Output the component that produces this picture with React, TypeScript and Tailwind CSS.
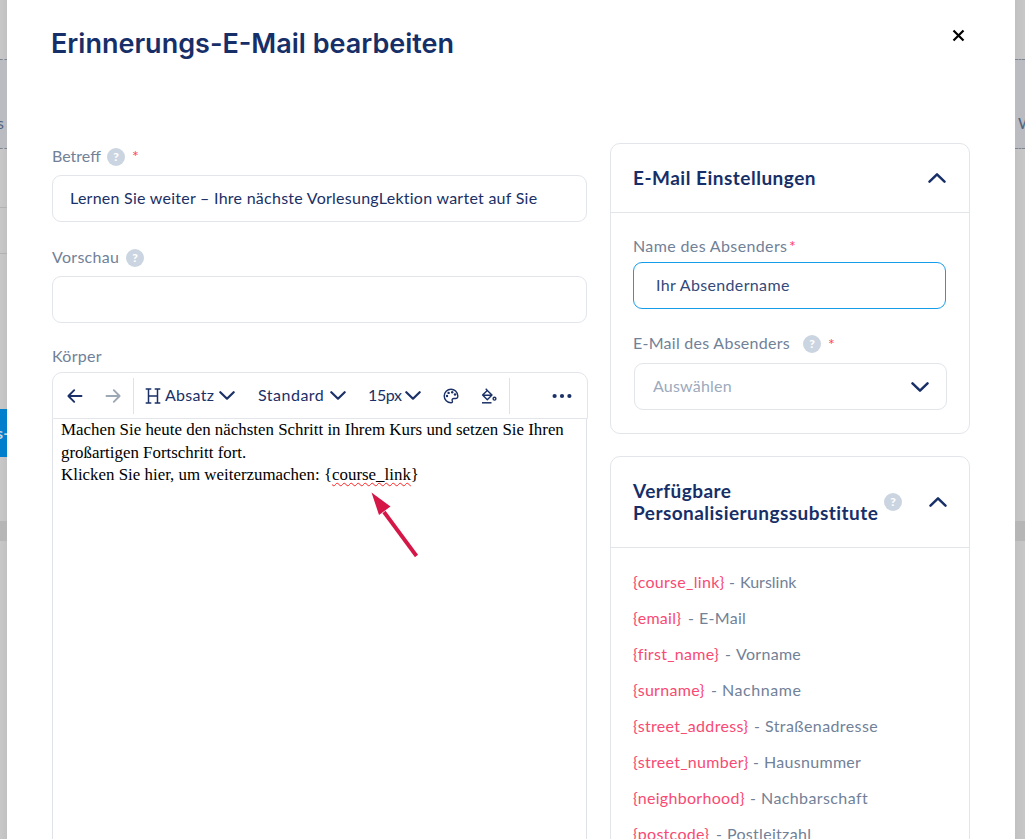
import React from 'react';

const PLACEHOLDERS = [
  { token: '{course_link}', label: 'Kurslink', tokenClass: 'w-[91px]', labelClass: 'tracking-[0px]' },
  { token: '{email}', label: 'E-Mail', tokenClass: 'w-[50px]', labelClass: '' },
  { token: '{first_name}', label: 'Vorname', tokenClass: 'w-[87px]', labelClass: '' },
  { token: '{surname}', label: 'Nachname', tokenClass: 'w-[73px]', labelClass: 'tracking-[0.55px]' },
  { token: '{street_address}', label: 'Straßenadresse', tokenClass: 'w-[116px]', labelClass: 'tracking-[0.4px]' },
  { token: '{street_number}', label: 'Hausnummer', tokenClass: 'w-[115px]', labelClass: '' },
  { token: '{neighborhood}', label: 'Nachbarschaft', tokenClass: 'w-[112px]', labelClass: 'tracking-[0.4px]' },
  { token: '{postcode}', label: 'Postleitzahl', tokenClass: 'w-[78px]', labelClass: '' },
];

function Help({ className = '' }: { className?: string }) {
  return (
    <span className={`flex h-[18px] w-[18px] shrink-0 items-center justify-center rounded-full bg-[#cbd5e1] text-[12px] leading-none font-black tracking-normal text-white ${className}`}>
      ?
    </span>
  );
}

function Star({ className = '' }: { className?: string }) {
  return <span className={`text-[16px] leading-none text-[#ff4069] ${className}`}>*</span>;
}

function Chevron({ up = false, className = '' }: { up?: boolean; className?: string }) {
  return (
    <svg viewBox="0 0 18 10" className={`shrink-0 ${className}`} fill="none" stroke="currentColor" strokeWidth="2.5" strokeLinecap="round" strokeLinejoin="round">
      <path d={up ? 'M1.5 8.6 9 1.4l7.5 7.2' : 'M1.5 1.4 9 8.6l7.5-7.2'} />
    </svg>
  );
}

function Backdrop({ side }: { side: 'left' | 'right' }) {
  const left = side === 'left';
  return (
    <div className={`flex h-full shrink-0 flex-col overflow-hidden from-[#c8c8c8] to-[#c1c1c1] text-[#52657f] ${left ? 'w-[7px] bg-linear-to-r' : 'w-[10px] bg-linear-to-l'}`}>
      <div className="h-[59px] shrink-0" />
      <div className="flex h-[90px] shrink-0 items-end border-y border-dashed border-[#7d8791] bg-[#bbbcc2] pb-[15px]">
        <span className={`text-[16px] leading-[20px] ${left ? '-ml-[3px]' : 'ml-[3px]'}`}>{left ? 's' : 'W'}</span>
      </div>
      <div className={`h-[59px] shrink-0 border-b ${left ? 'border-[#b0b2b4]' : 'border-transparent'}`} />
      <div className={`h-[46px] shrink-0 border-b ${left ? 'border-[#b0b2b4]' : 'border-transparent'}`} />
      <div className="h-[155px] shrink-0" />
      <div className={`flex h-12 shrink-0 items-center text-[16px] font-bold whitespace-nowrap text-[#c6d4df] ${left ? 'bg-[#0080cc]' : ''}`}>
        {left && <span className="-ml-[4px]">s-</span>}
      </div>
      <div className="h-16 shrink-0" />
      <div className="h-5 shrink-0 bg-[#b6b6b6]" />
    </div>
  );
}

function Toolbar() {
  return (
    <div className="flex h-[47px] w-[536px] items-center rounded-t-[10px] border border-[#e2e5e9] bg-white text-[16px] whitespace-nowrap text-[#1a3066]">
      <svg viewBox="0 0 16 16" className="ml-[14px] h-4 w-4" fill="none" stroke="currentColor" strokeWidth="1.9" strokeLinecap="round" strokeLinejoin="round">
        <path d="M14.5 8h-13M7.2 2.2 1.4 8l5.8 5.8" />
      </svg>
      <svg viewBox="0 0 16 16" className="ml-[22px] h-4 w-4 text-[#9ca8b4]" fill="none" stroke="currentColor" strokeWidth="1.9" strokeLinecap="round" strokeLinejoin="round">
        <path d="M1.5 8h13M8.8 2.2 14.6 8l-5.8 5.8" />
      </svg>
      <div className="ml-[12px] h-9 w-px bg-[#dfe2e6]" />
      <svg viewBox="0 0 16 16" className="ml-[11px] h-4 w-4" fill="none" stroke="currentColor" strokeWidth="1.5">
        <path d="M3.5 1v14M12.5 1v14M3.5 8h9M.7 1h5.6M9.7 1h5.6M.7 15h5.6M9.7 15h5.6" />
      </svg>
      <span className="-mt-[2px] ml-[4px] w-[50px]">Absatz</span>
      <Chevron className="ml-[4px] h-[9px] w-4" />
      <span className="-mt-[2px] ml-[23px] w-[68px] tracking-[0.5px]">Standard</span>
      <Chevron className="ml-[4px] h-[9px] w-4" />
      <span className="-mt-[2px] ml-[22px] w-[33px] tracking-[-0.4px]">15px</span>
      <Chevron className="ml-[4px] h-[9px] w-4" />
      <svg viewBox="0 0 16 16" className="ml-[22px] h-4 w-4" fill="none" stroke="currentColor" strokeWidth="1.4" strokeLinejoin="round">
        <path d="M8 1.2A6.8 6.8 0 1 0 8 14.8c1.2 0 1.7-.8 1.3-1.8-.6-1.5.1-2.5 1.7-2.5h1.5c1.6 0 2.5-1.1 2.3-2.7C14.4 4.1 11.6 1.2 8 1.2Z" />
        <g fill="currentColor" stroke="none">
          <circle cx="4" cy="8" r="1.2" />
          <circle cx="5.6" cy="4.9" r="1.2" />
          <circle cx="9.2" cy="4.2" r="1.2" />
          <circle cx="12" cy="6.5" r="1.2" />
        </g>
      </svg>
      <svg viewBox="0 0 16 16" className="ml-[22px] h-4 w-4" fill="none" stroke="currentColor" strokeWidth="1.4" strokeLinejoin="round">
        <path d="M4.7.8 6.9 2.9M6.3 2.4 11 7.1 6.3 11.8 1.6 7.1ZM1.8 7.2h9" />
        <circle cx="13.5" cy="10.7" r="1.4" />
        <path d="M1 14.8h9.5" strokeWidth="1.5" />
      </svg>
      <div className="ml-[12px] h-9 w-px bg-[#dfe2e6]" />
      <svg viewBox="0 0 20 6" className="ml-[42px] h-[6px] w-5" fill="currentColor">
        <circle cx="2.6" cy="3" r="2.1" />
        <circle cx="10" cy="3" r="2.1" />
        <circle cx="17.4" cy="3" r="2.1" />
      </svg>
    </div>
  );
}

export default function App() {
  return (
    <div className="flex h-[839px] w-[1025px] overflow-hidden bg-[#c7c7c7] font-['Lato',sans-serif] text-[16px] leading-[20px] tracking-[0.3px] text-[#718198]">
      <Backdrop side="left" />

      <main className="h-full w-[1008px] shrink-0 overflow-hidden bg-white pl-[45px]">
        <header className="flex h-[143px] items-start justify-between pt-[27px] pr-[50px]">
          <h1 className="-ml-px font-['Inter',sans-serif] text-[27px] leading-[34px] font-semibold tracking-normal text-[#172f68]">Erinnerungs-E-Mail bearbeiten</h1>
          <svg viewBox="0 0 13 13" className="mt-[2px] h-[13px] w-[13px]" stroke="#000" strokeWidth="2.2">
            <path d="M1.5 1.5l10 10M11.5 1.5l-10 10" />
          </svg>
        </header>

        <div className="flex items-start gap-[23px]">
          {/* Message form */}
          <section className="w-[535px] shrink-0">
            <div className="flex h-8 items-center pb-[4px]">
              <span className="-mt-[2px] w-[55px] tracking-normal">Betreff</span>
              <Help />
              <Star className="-mt-[2px] ml-[7px]" />
            </div>
            <div className="flex h-[47px] items-center rounded-[9px] border border-[#e2e5e9] pb-[2px] pl-[17px] tracking-[0.26px] whitespace-nowrap text-[#1a3066]">
              Lernen Sie weiter – Ihre nächste VorlesungLektion wartet auf Sie
            </div>
            <div className="flex h-[54px] items-end pb-[9px]">
              <span className="w-[74px]">Vorschau</span>
              <Help />
            </div>
            <div className="h-[47px] rounded-[9px] border border-[#e2e5e9]" />
            <div className="flex h-[49px] items-end pb-[6px]">Körper</div>
            <Toolbar />
            <div className="relative h-[421px] border-x border-[#dfe2e6] pl-[8px] font-['Liberation_Serif',serif] text-[16.9px] leading-[22.5px] tracking-normal whitespace-nowrap text-black">
              <p>Machen Sie heute den nächsten Schritt in Ihrem Kurs und setzen Sie Ihren</p>
              <p>großartigen Fortschritt fort.</p>
              <p>
                Klicken Sie hier, um weiterzumachen: {'{'}
                <span className="underline decoration-[#f22] decoration-wavy decoration-[1.2px] underline-offset-2 [text-decoration-skip-ink:none]">course_link</span>
                {'}'}
              </p>
              <svg viewBox="0 0 50 68" className="absolute top-[73px] left-[317px] h-[68px] w-[50px]">
                <path d="M46.5 64 14 20" stroke="#d51748" strokeWidth="3.8" />
                <path d="M1.5.5 20.5 14.5 9 23Z" fill="#d51748" />
              </svg>
            </div>
          </section>

          {/* Settings */}
          <aside className="w-[360px] shrink-0">
            <div className="h-[291px] rounded-[10px] border border-[#e2e5e9]">
              <div className="flex h-[69px] items-center justify-between border-b border-[#e2e5e9] pr-[23px] pl-[22px]">
                <h2 className="text-[19px] font-bold tracking-[0.5px] text-[#172f68]">E-Mail Einstellungen</h2>
                <Chevron up className="h-[10px] w-[18px] text-[#172f68]" />
              </div>
              <div className="px-[22px] pt-[23px]">
                <div className="flex h-[26px] items-start">
                  <span className="w-[156px] tracking-[0.37px]">Name des Absenders</span>
                  <Star className="mt-[2px]" />
                </div>
                <div className="flex h-[47px] w-[313px] items-center rounded-[9px] border border-[#159de9] pb-[2px] pl-[22px] tracking-[0.35px] text-[#344a7a]">
                  Ihr Absendername
                </div>
                <div className="flex h-[54px] items-center pt-[15px]">
                  <span className="-mt-[2px] w-[170px] tracking-[0.27px]">E-Mail des Absenders</span>
                  <Help className="mt-px" />
                  <Star className="ml-[7px]" />
                </div>
                <div className="ml-px flex h-[47px] w-[313px] items-center justify-between rounded-[9px] border border-[#e2e5e9] pr-[17px] pl-[18px] text-[#9caabd]">
                  <span className="-mt-[2px] tracking-[0.2px]">Auswählen</span>
                  <Chevron className="h-[10px] w-[18px] text-[#172f68]" />
                </div>
              </div>
            </div>

            <div className="mt-[22px] h-[500px] rounded-[10px] border border-[#e2e5e9]">
              <div className="flex h-[91px] items-center border-b border-[#e2e5e9] pl-[22px]">
                <h2 className="w-[251px] text-[19px] leading-[22px] font-bold tracking-[0.46px] text-[#172f68]">Verfügbare Personalisierungssubstitute</h2>
                <Help />
                <Chevron up className="ml-[27px] h-[10px] w-[18px] text-[#172f68]" />
              </div>
              <ul className="pt-[16px] pl-[22px]">
                {PLACEHOLDERS.map(({ token, label, tokenClass, labelClass }) => (
                  <li key={token} className="flex h-9 items-center whitespace-nowrap">
                    <span className={`text-[#f84a73] ${tokenClass}`}>{token}</span>
                    <span className="ml-[5px] w-[11px]">-</span>
                    <span className={labelClass}>{label}</span>
                  </li>
                ))}
              </ul>
            </div>
          </aside>
        </div>
      </main>

      <Backdrop side="right" />
    </div>
  );
}
